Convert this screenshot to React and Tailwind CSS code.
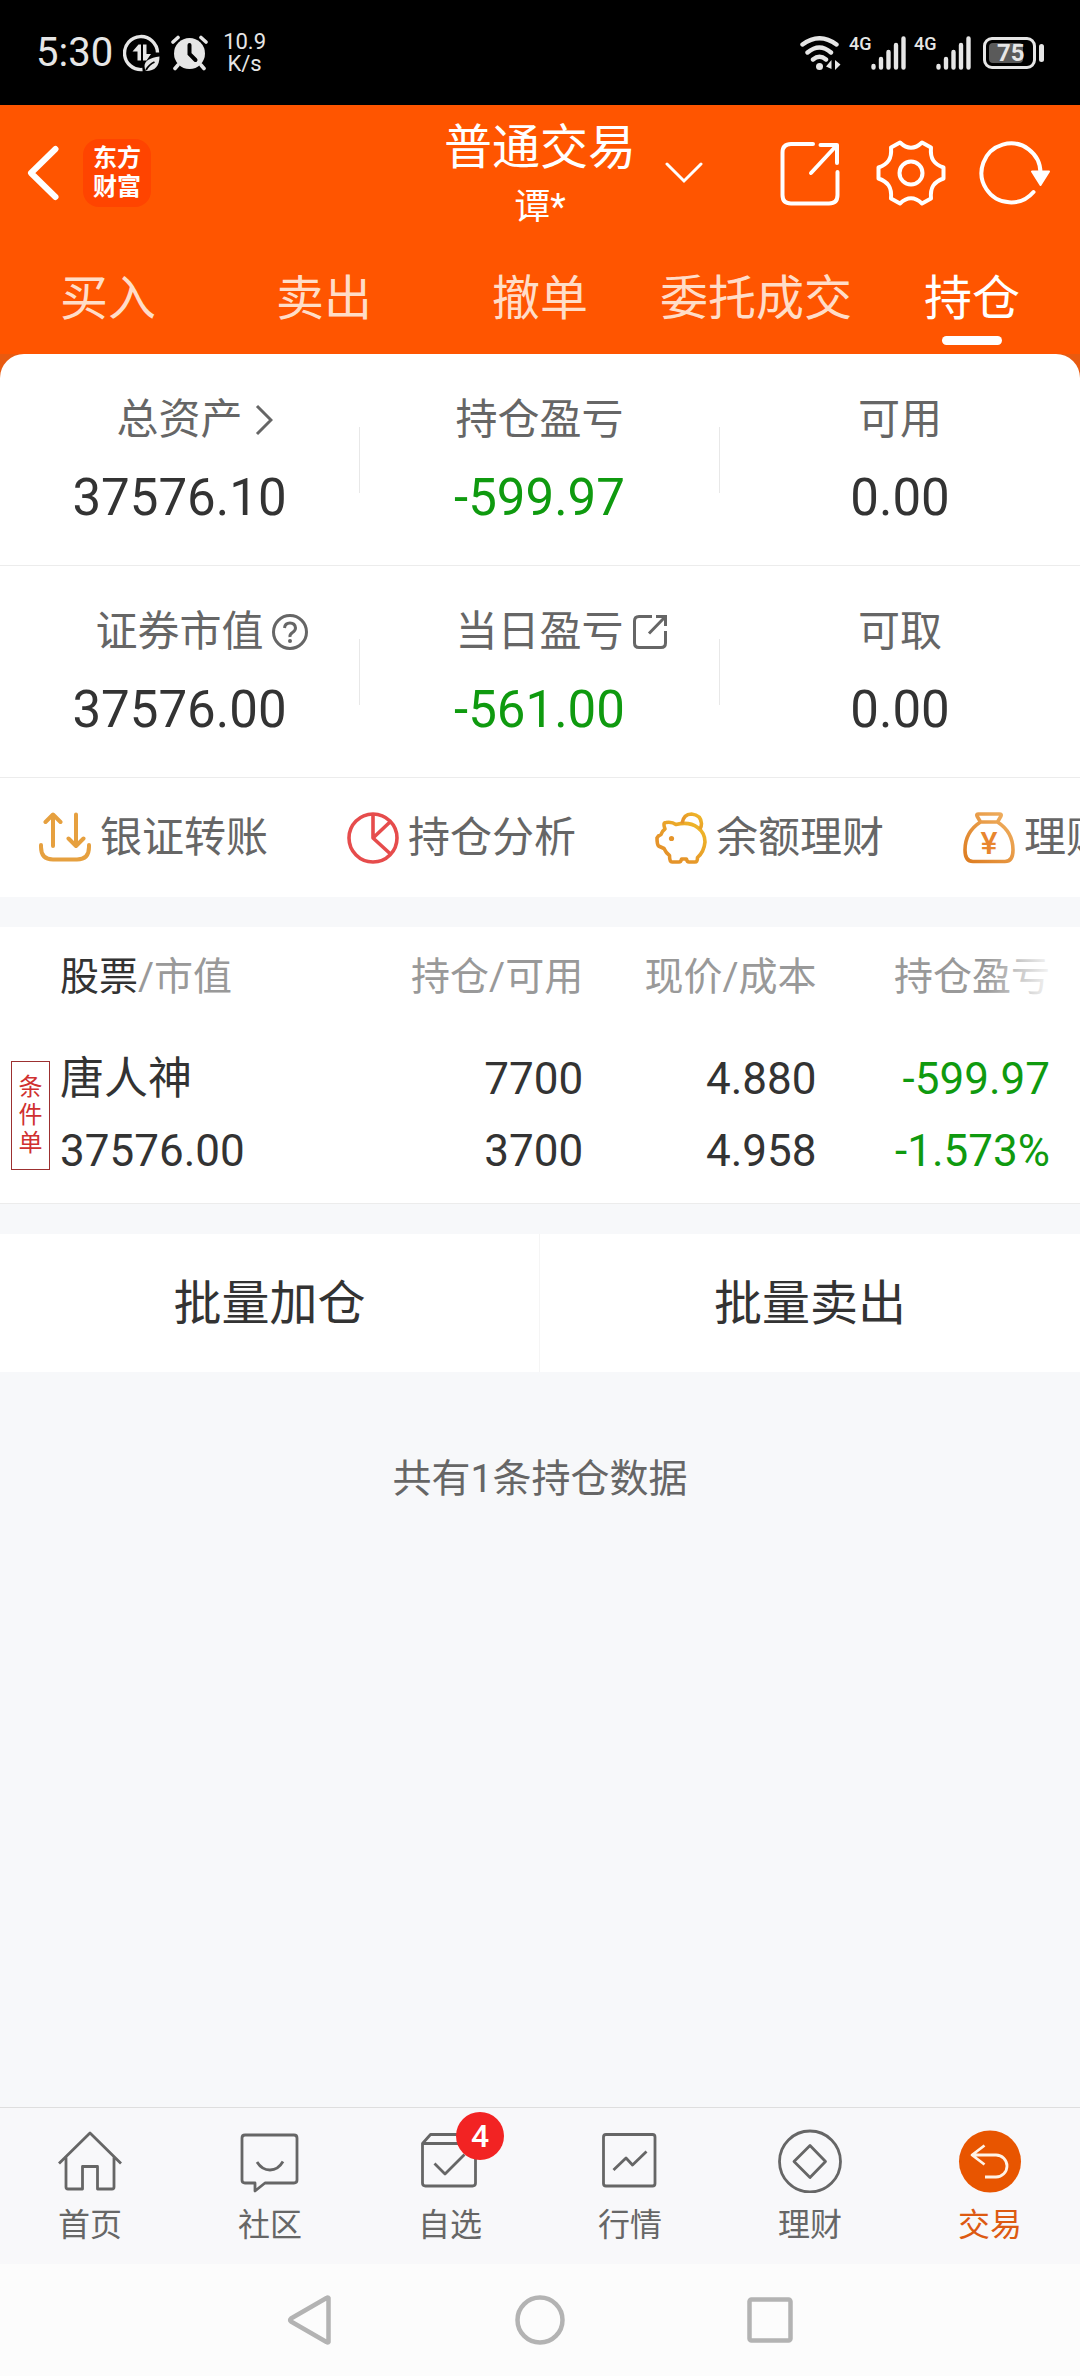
const actions = [
  { label: "银证转账", Icon: TransferIcon },
  { label: "持仓分析", Icon: PieIcon },
  { label: "余额理财", Icon: PiggyIcon },
  { label: "理财", Icon: MoneyBagIcon },
];

const summary = [
  [
    { label: "总资产", value: "37576.10", Icon: ChevronRight },
    { label: "持仓盈亏", value: "-599.97", down: true },
    { label: "可用", value: "0.00" },
  ],
  [
    { label: "证券市值", value: "37576.00", Icon: HelpIcon },
    { label: "当日盈亏", value: "-561.00", down: true, Icon: SmallShareIcon },
    { label: "可取", value: "0.00" },
  ],
];

const tabs = ["买入", "卖出", "撤单", "委托成交", "持仓"];

const navItems = [
  { label: "首页", Icon: HomeIcon },
  { label: "社区", Icon: CommunityIcon },
  { label: "自选", Icon: WatchlistIcon, badge: 4 },
  { label: "行情", Icon: MarketIcon },
  { label: "理财", Icon: WealthIcon },
  { label: "交易", Icon: TradeIcon, active: true },
];

/* ---------- status bar ---------- */

function Signal() {
  return (
    <div className="flex h-[34px]">
      <span className="w-[22px] text-lg leading-4 font-medium">4G</span>
      <svg width="35" height="34" viewBox="0 0 35 34" stroke="currentColor" strokeWidth="4.4" strokeLinecap="round">
        <path d="M2.5 30v1.5M10 23v8.5M17.5 16v15.5M25 9v22.5M32.5 2.5v29" />
      </svg>
    </div>
  );
}

function StatusBar() {
  return (
    <div className="flex h-[105px] items-center justify-between bg-black pr-9 pl-9 text-[#e6e6e6]">
      <div className="flex items-center">
        <span className="text-[40px] leading-[48px]">5:30</span>
        <svg className="ml-2.5" width="37" height="38" viewBox="0 0 37 38" fill="none" stroke="currentColor">
          <path d="M19.5 35.5A16.500 16.500 0 1 1 34.5 18.5" strokeWidth="3.4" />
          <path d="M9.500 17.500L15.500 10.500H18V26.500H14.500V17.500ZM20 10.500H23.500V20H28L23.500 26.500H20Z" fill="currentColor" stroke="none" />
          <path d="M36.500 22.500C27 23.500 21.500 27 21.500 32Q21.500 35 23 37C32 37 36.500 32 36.500 22.500Z" fill="currentColor" stroke="none" />
          <path d="M23 36Q26 30.500 31.500 28" stroke="black" strokeWidth="1.8" />
        </svg>
        <svg className="ml-[11px]" width="37" height="36" viewBox="0 0 37 36" fill="none" stroke="currentColor" strokeLinecap="round">
          <circle cx="18.5" cy="18.5" r="15.5" fill="currentColor" stroke="none" />
          <path d="M2 7L7 2.500M35 7L30 2.500M7 30L4 33.500M30 30L33 33.500" strokeWidth="3.6" />
          <path d="M18.500 10V19l6 6" stroke="black" strokeWidth="4" />
        </svg>
        <div className="ml-[15px] text-center text-[22px] leading-[22px]">
          <div>10.9</div>
          <div>K/s</div>
        </div>
      </div>
      <div className="flex items-center">
        <svg width="41" height="34" viewBox="0 0 41 34" fill="none" stroke="currentColor" strokeWidth="4.4" strokeLinecap="round">
          <path d="M2.500 8.500Q19.500-4 36.500 8.500M7.500 16.500Q19.500 6.500 31 16.500M13 23.500Q19.500 18 26 23.500" />
          <circle cx="19.5" cy="30.5" r="3.5" fill="currentColor" stroke="none" />
          <path d="M31.500 33V24L26 30.500zM35 24V34L40.500 28.500z" fill="currentColor" stroke="none" />
        </svg>
        <div className="ml-2 flex gap-2">
          <Signal />
          <Signal />
        </div>
        <div className="ml-3 flex items-center gap-[3px]">
          <div className="flex h-8 w-[53px] items-center rounded-[9px] border-[3px] border-current p-[3px]">
            <div className="flex h-full w-[34px] items-center rounded-[4px] bg-[#5a5a5a]">
              <span className="ml-2 text-2xl leading-6 font-bold">75</span>
            </div>
          </div>
          <div className="h-[18px] w-[5px] rounded-full bg-current" />
        </div>
      </div>
    </div>
  );
}

/* ---------- header ---------- */

function HeaderSvg({ children }) {
  return (
    <svg
      className="overflow-visible"
      width="72"
      height="72"
      viewBox="0 0 72 72"
      fill="none"
      stroke="currentColor"
      strokeWidth="4"
      strokeLinecap="round"
      strokeLinejoin="round"
    >
      {children}
    </svg>
  );
}

function HeaderIcons() {
  return (
    <div className="ml-auto flex gap-[30px]">
      <button aria-label="分享">
        <HeaderSvg>
          <path d="M40 7H18q-8.500 0-8.500 8.500V58q0 8.500 8.500 8.500H56q8.500 0 8.500-8.500V35M47.500 8H64V26M64 8L38 36" />
        </HeaderSvg>
      </button>
      <button aria-label="设置">
        <HeaderSvg>
          <path d="M25 5.500Q36 16 47 5.500L56 10.500C55 22 59 27 68.500 30.500V41.500C59 45 55 50 56 61.500L47 66.500Q36 56 25 66.500L16 61.500C17 50 13 45 3.500 41.500V30.500C13 27 17 22 16 10.500Z" />
          <circle cx="36" cy="36" r="11.5" />
        </HeaderSvg>
      </button>
      <button aria-label="刷新">
        <HeaderSvg>
          <path d="M63.500 36A29.500 29.500 0 1 0 56.500 55" />
          <path d="M55 34.500H72L63.500 48Z" fill="currentColor" strokeWidth="2" />
        </HeaderSvg>
      </button>
    </div>
  );
}

function Header() {
  return (
    <header className="bg-[#ff5500] text-white">
      <div className="grid h-[136px] grid-cols-[1fr_auto_1fr] items-center">
        <div className="flex items-center gap-6 pl-[27px]">
          <button aria-label="返回">
            <svg width="32" height="56" viewBox="0 0 32 56" fill="none" stroke="currentColor" strokeWidth="6" strokeLinecap="round" strokeLinejoin="round">
              <path d="M28.500 4L4 28L28.500 52" />
            </svg>
          </button>
          <div className="flex h-[68px] w-[68px] flex-col items-center justify-center rounded-2xl bg-[#ff4400] text-2xl leading-[29px] font-bold">
            <span>东方</span>
            <span>财富</span>
          </div>
        </div>
        <div className="text-center">
          <h1 className="text-5xl leading-[68px]">普通交易</h1>
          <p className="text-4xl leading-[50px]">谭*</p>
        </div>
        <div className="flex items-center pr-[31px]">
          <button className="ml-[29px]" aria-label="切换账户">
            <svg width="38" height="24" viewBox="0 0 38 24" fill="none" stroke="currentColor" strokeWidth="3" strokeLinecap="round">
              <path d="M2 3L19 20L36 3" />
            </svg>
          </button>
          <HeaderIcons />
        </div>
      </div>
      <nav className="grid h-[113px] grid-cols-5">
        {tabs.map((tab) => (
          <a
            key={tab}
            href="#"
            className={`flex flex-col items-center justify-end gap-[5px] pb-[9px] text-5xl leading-[64px] ${
              tab === "持仓" ? "text-white" : "text-[#ffddc8]"
            }`}
          >
            {tab}
            <span className={`h-[9px] w-[60px] rounded-full ${tab === "持仓" ? "bg-white" : ""}`} />
          </a>
        ))}
      </nav>
    </header>
  );
}

/* ---------- account summary ---------- */

function ChevronRight() {
  return (
    <svg className="ml-3" width="18" height="32" viewBox="0 0 18 32" fill="none" stroke="currentColor" strokeWidth="3">
      <path d="M2 2L16 16L2 30" />
    </svg>
  );
}

function HelpIcon() {
  return (
    <svg className="ml-2" width="36" height="36" viewBox="0 0 36 36" fill="none" stroke="currentColor" strokeWidth="3">
      <circle cx="18" cy="18" r="16.5" />
      <path d="M12.500 14Q13 9 18 9T23.500 14Q23.500 16.500 20.500 18.500T18 23" />
      <circle cx="18" cy="27" r="2" fill="currentColor" stroke="none" />
    </svg>
  );
}

function SmallShareIcon() {
  return (
    <svg className="ml-2" width="36" height="36" viewBox="0 0 36 36" fill="none" stroke="currentColor" strokeWidth="3">
      <path d="M20 2.500H7Q2.500 2.500 2.500 7V29Q2.500 33.500 7 33.500H29Q33.500 33.500 33.500 29V17M24 2.500H33.500V12M33 3L17 19.500" />
    </svg>
  );
}

function SummaryCell({ label, value, down, Icon }) {
  return (
    <div className="flex flex-1 flex-col items-center gap-[10px] pt-[3px]">
      <div className="grid w-full grid-cols-[1fr_auto_1fr] items-center text-[42px] leading-[64px] text-[#666]">
        <span className="col-start-2">{label}</span>
        {Icon && <Icon />}
      </div>
      <div className={`text-[51px] leading-[72px] ${down ? "text-[#0f9a0f]" : "text-[#333]"}`}>{value}</div>
    </div>
  );
}

function Summary() {
  return (
    <section className="bg-[#e85a10]">
      <div className="rounded-t-[24px] bg-white">
        {summary.map((row, i) => (
          <div key={i} className="grid h-[212px] grid-cols-3 border-b border-[#ececec]">
            {row.map((cell, j) => (
              <div key={cell.label} className="flex items-center">
                <SummaryCell {...cell} />
                {j < 2 && <div className="h-[66px] w-px bg-[#e8e8e8]" />}
              </div>
            ))}
          </div>
        ))}
      </div>
    </section>
  );
}

/* ---------- quick actions ---------- */

function TransferIcon() {
  return (
    <svg width="52" height="52" viewBox="0 0 52 52" fill="none" stroke="#e6a03f" strokeWidth="4" strokeLinecap="round" strokeLinejoin="round">
      <path d="M14 34V3M6.500 10L14 2.500L21.500 10M37 2.500V33M29.500 26.500L37 34L44.500 26.500M2 33V35Q2 47.500 14 47.500H38Q50 47.500 50 35V33" />
    </svg>
  );
}

function PieIcon() {
  return (
    <svg width="52" height="52" viewBox="0 0 52 52" fill="none" stroke="#e64c4c" strokeWidth="3.6">
      <circle cx="26" cy="26" r="24" />
      <path d="M26 2V26L43.500 9.500M26 26L43.500 42" strokeLinejoin="round" />
    </svg>
  );
}

function PiggyIcon() {
  return (
    <svg width="52" height="52" viewBox="0 0 52 52" fill="none" stroke="url(#pig)" strokeWidth="3.6" strokeLinejoin="round">
      <defs>
        <linearGradient id="pig" x1="0" y1="1" x2="1" y2="0">
          <stop offset="0.3" stopColor="#e5942a" />
          <stop offset="1" stopColor="#f0bb28" />
        </linearGradient>
      </defs>
      <path d="M21 12.500C40 8 50 19 50 30Q49 40 42.500 45.500Q42.500 50 40 50H34Q32 50 31.500 47H26.500Q26 50 24 50H17Q14.500 50 14.500 43.500Q11 41 9 36.500L3.500 34Q2 32 2 26Q3 23.500 6 22.500Q7 19 10 17Q7.500 10.500 11 10.500Q17 9.500 21 12.500Z" />
      <path d="M27 11.500Q28.500 2 36.500 2Q46 3 46.500 11.500Q46.500 14 45 17" />
      <circle cx="16.5" cy="26.5" r="2.6" fill="#e5942a" stroke="none" />
    </svg>
  );
}

function MoneyBagIcon() {
  return (
    <svg width="52" height="52" viewBox="0 0 52 52" fill="none" stroke="url(#bag)" strokeWidth="3.6" strokeLinejoin="round">
      <defs>
        <linearGradient id="bag" x1="0" y1="1" x2="1" y2="0">
          <stop offset="0" stopColor="#dd7c20" />
          <stop offset="1" stopColor="#f0b264" />
        </linearGradient>
      </defs>
      <path d="M17.500 10L14 4Q13 2 15.500 2H36.500Q39 2 38 4L34.500 10ZM17.500 10Q2 20 2 38Q2 49.500 10 49.500H42Q50 49.500 50 38Q50 20 34.500 10" />
      <text x="26" y="42" textAnchor="middle" fontSize="32" fontWeight="500" fill="#e8862e" stroke="none">¥</text>
    </svg>
  );
}

function QuickActions() {
  return (
    <section className="flex h-[119px] items-center overflow-hidden bg-white">
      {actions.map(({ label, Icon }) => (
        <a key={label} href="#" className="flex w-[308px] shrink-0 items-center gap-[9px] pl-[39px] text-[42px] leading-[64px] whitespace-nowrap text-[#666]">
          <Icon />
          {label}
        </a>
      ))}
    </section>
  );
}

/* ---------- holdings ---------- */

function Holdings() {
  return (
    <table className="w-full table-fixed border-b border-[#ececec] bg-white">
      <thead>
        <tr className="h-24 text-right text-[39px] leading-[60px] text-[#999]">
          <th className="w-[32%] pt-[3px] pl-[60px] text-left font-normal">
            <span className="text-[#333]">股票</span>/市值
          </th>
          <th className="w-[22%] pt-[3px] font-normal">持仓/可用</th>
          <th className="pt-[3px] font-normal">现价/成本</th>
          <th className="w-[24.4%] pt-[3px] pr-[30px] font-normal">
            <span className="relative inline-block">
              持仓盈亏
              <span className="absolute inset-y-0 right-0 w-16 bg-linear-to-r from-white/0 to-white/90" />
            </span>
          </th>
        </tr>
      </thead>
      <tbody>
        <tr className="text-right text-[44px] leading-[72px] text-[#333]">
          <td className="pt-5 pb-4 pl-[11px]">
            <div className="flex items-center gap-[10px] text-left">
              <span className="flex h-[109px] w-[39px] flex-col items-center justify-center border border-[#9c3030] text-2xl leading-7 text-[#d03030]">
                <span>条</span>
                <span>件</span>
                <span>单</span>
              </span>
              <div>
                <div>唐人神</div>
                <div>37576.00</div>
              </div>
            </div>
          </td>
          <td className="pt-5 pb-4">
            <div>7700</div>
            <div>3700</div>
          </td>
          <td className="pt-5 pb-4">
            <div>4.880</div>
            <div>4.958</div>
          </td>
          <td className="pt-5 pr-[30px] pb-4 text-[#0f9a0f]">
            <div>-599.97</div>
            <div>-1.573%</div>
          </td>
        </tr>
      </tbody>
    </table>
  );
}

/* ---------- bottom navigation ---------- */

function NavSvg({ children }) {
  return (
    <svg width="64" height="64" viewBox="0 0 64 64" fill="none" stroke="currentColor" strokeWidth="2.8" strokeLinejoin="round">
      {children}
    </svg>
  );
}

function HomeIcon() {
  return (
    <NavSvg>
      <path d="M1 34.500L32 4L63 34.500M8 28.500V58Q8 60 10 60H24.500V37.500H39.500V60H54Q56 60 56 58V28.500" />
    </NavSvg>
  );
}

function CommunityIcon() {
  return (
    <NavSvg>
      <path d="M7 6H56Q59 6 59 9V51Q59 54 56 54H27L17 62V54H7Q4 54 4 51V9Q4 6 7 6Z" />
      <path d="M19 33Q24 41 32 41T45 32.500" />
    </NavSvg>
  );
}

function WatchlistIcon() {
  return (
    <NavSvg>
      <path d="M4.500 14.500L12.500 5.500H50L57.500 14.500V54Q57.500 57 54.500 57H7.500Q4.500 57 4.500 54ZM4.500 14.500H57.500M16.500 34.500L27 45L46.500 25.500" />
    </NavSvg>
  );
}

function MarketIcon() {
  return (
    <NavSvg>
      <rect x="5.5" y="5.5" width="51.5" height="51.5" rx="2.5" />
      <path d="M15.500 41L28 29L34.500 36L48.500 22.500" />
    </NavSvg>
  );
}

function WealthIcon() {
  return (
    <NavSvg>
      <circle cx="32" cy="32.5" r="30.5" />
      <path d="M32 16.500L47.500 32.500L32 48.500L16 32.500Z" />
    </NavSvg>
  );
}

function TradeIcon() {
  return (
    <NavSvg>
      <circle cx="32" cy="32.5" r="31" fill="#e85500" stroke="none" />
      <path d="M26.500 16.500L14 26L26.500 35.500M14 26H38A11 11 0 0 1 38 48H27" stroke="#fff3e6" />
    </NavSvg>
  );
}

function BottomNav() {
  return (
    <nav className="grid grid-cols-6 border-t border-[#dedede] bg-[#f8f8fa] pt-[21px] pb-[19px]">
      {navItems.map(({ label, Icon, badge, active }) => (
        <a
          key={label}
          href="#"
          className={`flex flex-col items-center gap-3 text-[32px] leading-10 ${active ? "text-[#dd5a12]" : "text-[#666]"}`}
        >
          <span className="relative">
            <Icon />
            {badge && (
              <span className="absolute -top-[17px] left-[38px] flex h-12 w-12 items-center justify-center rounded-full bg-[#f22323] text-[32px] font-medium text-white">
                {badge}
              </span>
            )}
          </span>
          {label}
        </a>
      ))}
    </nav>
  );
}

function SystemNav() {
  return (
    <div className="flex h-28 items-center justify-center gap-[180px] bg-[#fcfcfc] text-[#b3b3b3]">
      <button aria-label="后退">
        <svg width="50" height="50" viewBox="0 0 50 50" fill="none" stroke="currentColor" strokeWidth="4.5" strokeLinejoin="round">
          <path d="M43.500 3V47Q43 48 41.500 47L6 26.500Q4.500 25 6 23.500L41.500 3Q43 2 43.500 3Z" />
        </svg>
      </button>
      <button aria-label="主屏幕">
        <svg width="50" height="50" viewBox="0 0 50 50" fill="none" stroke="currentColor" strokeWidth="4.5">
          <circle cx="25" cy="25" r="22.5" />
        </svg>
      </button>
      <button aria-label="最近任务">
        <svg width="50" height="50" viewBox="0 0 50 50" fill="none" stroke="currentColor" strokeWidth="4.5">
          <rect x="4.5" y="4.5" width="41" height="41" rx="2" />
        </svg>
      </button>
    </div>
  );
}

const App = () => {
  return (
    <div className="flex min-h-screen flex-col bg-[#f7f8fa] font-[Roboto,'Noto_Sans_CJK_SC',sans-serif]">
      <StatusBar />
      <Header />
      <main className="flex-1">
        <Summary />
        <QuickActions />
        <div className="h-[30px]" />
        <Holdings />
        <div className="mt-[30px] grid grid-cols-2 bg-white text-5xl leading-[136px] text-[#333]">
          <button className="border-r border-[#f5f5f5] pt-[2px]">批量加仓</button>
          <button className="pt-[2px]">批量卖出</button>
        </div>
        <p className="mt-[77px] text-center text-[39px] leading-[60px] text-[#666]">共有1条持仓数据</p>
      </main>
      <BottomNav />
      <SystemNav />
    </div>
  );
};

export default App;
